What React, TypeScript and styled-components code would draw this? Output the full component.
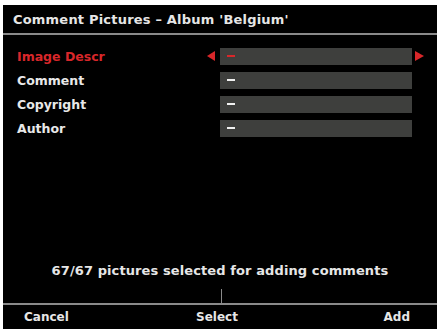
import React from "react";
import styled, { createGlobalStyle } from "styled-components";

const Global = createGlobalStyle`
  html, body { margin: 0; padding: 0; background: #ffffff; }
  body { font-family: "DejaVu Sans", "Liberation Sans", sans-serif; }
`;

const Screen = styled.div`
  margin: 5px 0 0 3px;
  width: 434px;
  height: 324px;
  background: #000;
  display: flex;
  flex-direction: column;
  color: #e6e6e6;
  font-weight: bold;
`;

const Header = styled.div`
  height: 28px;
  display: flex;
  align-items: center;
  padding-left: 10px;
  font-size: 13px;
  border-bottom: 2px solid #8a8a8a;
  letter-spacing: 0.2px;
`;

const Body = styled.div`
  flex: 1;
  display: flex;
  flex-direction: column;
  padding-top: 9px;
  position: relative;
`;

const Row = styled.div`
  height: 24px;
  display: grid;
  grid-template-columns: 186px 17px 192px 14px;
  align-items: center;
  padding-left: 14px;
`;

const Label = styled.div<{ $active?: boolean }>`
  font-size: 12.5px;
  color: ${(p) => (p.$active ? "#d8272a" : "#e8e8e8")};
`;

const Field = styled.div`
  height: 17px;
  background: #3e3f3d;
  display: flex;
  align-items: center;
  padding-left: 7px;
`;

const Dash = styled.span<{ $active?: boolean }>`
  display: block;
  width: 8px;
  height: 2px;
  background: ${(p) => (p.$active ? "#d8272a" : "#f0f0f0")};
`;

const ArrowCell = styled.div<{ $side: "left" | "right" }>`
  display: flex;
  justify-content: ${(p) => (p.$side === "left" ? "flex-end" : "flex-start")};
  padding: ${(p) => (p.$side === "left" ? "0 4px 0 0" : "0 0 0 3px")};
  align-items: center;
`;

const Spacer = styled.div`
  flex: 1;
`;

const Status = styled.div`
  text-align: center;
  font-size: 13px;
  padding-bottom: 25px;
  letter-spacing: 0.1px;
`;

const Tick = styled.div`
  position: absolute;
  left: 218px;
  bottom: 0;
  width: 1px;
  height: 14px;
  background: #8a8a8a;
`;

const Footer = styled.div`
  height: 24px;
  border-top: 2px solid #8a8a8a;
  display: grid;
  grid-template-columns: 1fr 1fr 1fr;
  align-items: center;
  font-size: 12px;
  padding: 0 27px 0 21px;
`;

const SoftKey = styled.div<{ $align: "left" | "center" | "right" }>`
  text-align: ${(p) => p.$align};
`;

const Arrow = ({ dir }: { dir: "left" | "right" }) => (
  <svg width="9" height="10" viewBox="0 0 9 10">
    {dir === "left" ? (
      <polygon points="8,0 8,10 0,5" fill="#d8272a" />
    ) : (
      <polygon points="0,0 0,10 9,5" fill="#d8272a" />
    )}
  </svg>
);

const rows = ["Image Descr", "Comment", "Copyright", "Author"];

export default function App() {
  return (
    <>
      <Global />
      <Screen>
        <Header>Comment Pictures – Album 'Belgium'</Header>
        <Body>
          {rows.map((r, i) => (
            <Row key={r}>
              <Label $active={i === 0}>{r}</Label>
              <ArrowCell $side="left">{i === 0 && <Arrow dir="left" />}</ArrowCell>
              <Field>
                <Dash $active={i === 0} />
              </Field>
              <ArrowCell $side="right">{i === 0 && <Arrow dir="right" />}</ArrowCell>
            </Row>
          ))}
          <Spacer />
          <Status>67/67 pictures selected for adding comments</Status>
          <Tick />
        </Body>
        <Footer>
          <SoftKey $align="left">Cancel</SoftKey>
          <SoftKey $align="center">Select</SoftKey>
          <SoftKey $align="right">Add</SoftKey>
        </Footer>
      </Screen>
    </>
  );
}
